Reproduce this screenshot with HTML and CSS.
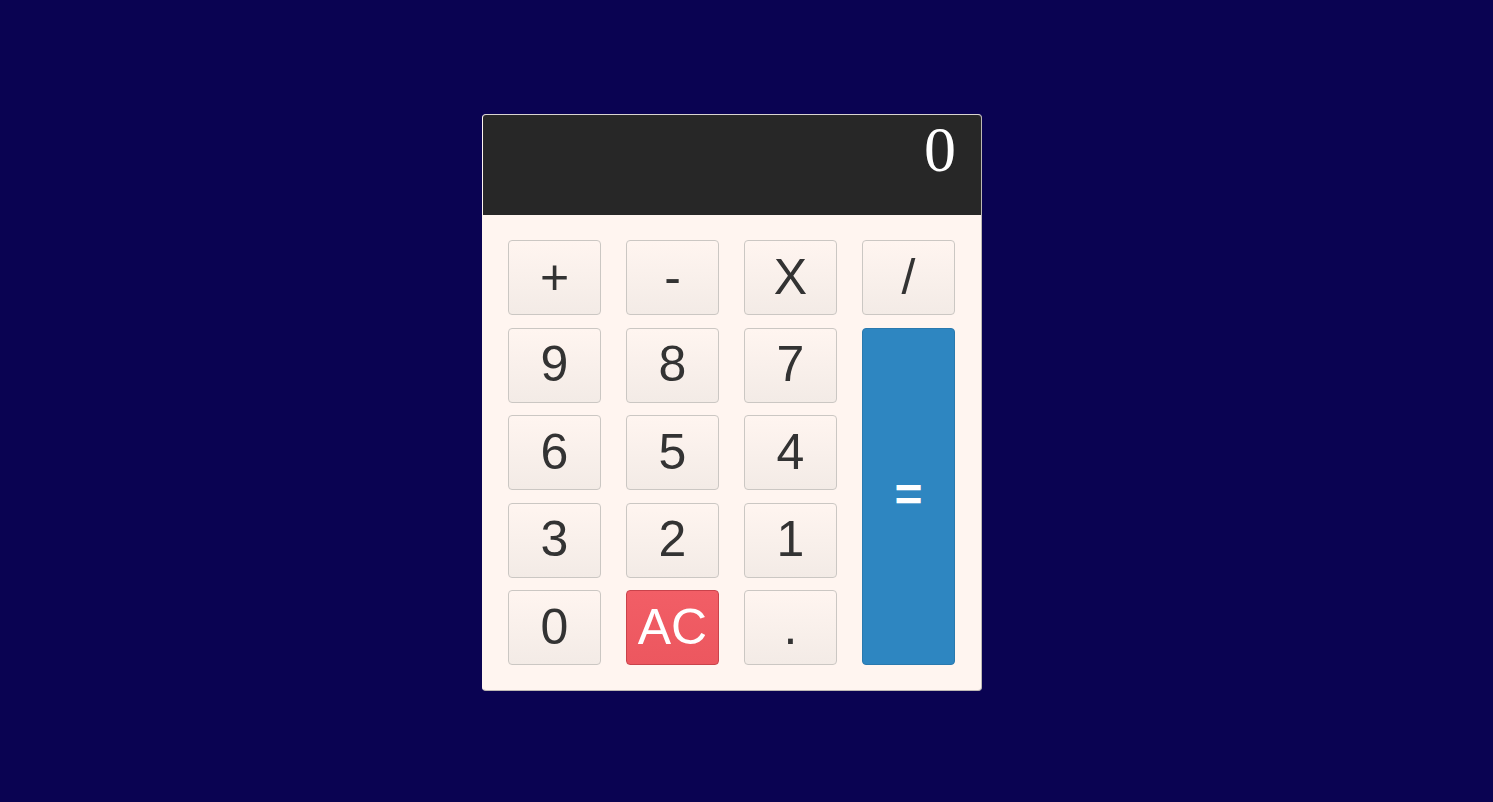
FILE: index.html
```html
<!DOCTYPE html>
<html>
<head>
<meta charset="utf-8">
<link rel="stylesheet" href="styles.css">
</head>
<body>
<div class="calc">
  <div class="display">0</div>
  <div class="keys">
    <button class="key">+</button>
    <button class="key">-</button>
    <button class="key">X</button>
    <button class="key">/</button>
    <button class="key">9</button>
    <button class="key">8</button>
    <button class="key">7</button>
    <button class="key equals">=</button>
    <button class="key">6</button>
    <button class="key">5</button>
    <button class="key">4</button>
    <button class="key">3</button>
    <button class="key">2</button>
    <button class="key">1</button>
    <button class="key">0</button>
    <button class="key clear">AC</button>
    <button class="key">.</button>
  </div>
</div>
</body>
</html>
```
FILE: styles.css
```css
html, body {
  margin: 0;
  padding: 0;
  background: #0a0352;
  height: 100%;
}
body {
  font-family: "Liberation Sans", Arial, sans-serif;
}
.calc {
  margin: 114px 0 0 482px;
  width: 498px;
  background: #fff5f0;
  border: 1px solid #bdb8b4;
  border-top-color: #d9d4d0;
  border-left-color: #fff5f0;
  border-radius: 4px;
  overflow: hidden;
}
.display {
  height: 100px;
  box-sizing: border-box;
  background: #272727;
  color: #fff;
  font-family: "Liberation Serif", "Times New Roman", serif;
  font-size: 64px;
  line-height: 64px;
  text-align: right;
  padding: 3px 25px 0 25px;
}
.keys {
  display: grid;
  grid-template-columns: repeat(4, 93px);
  grid-template-rows: repeat(5, 75px);
  column-gap: 25px;
  row-gap: 12.5px;
  padding: 25px 26px 25px 25px;
}
.key {
  font-family: "Liberation Sans", Arial, sans-serif;
  font-size: 50px;
  color: #333;
  background: linear-gradient(#fff5f0, #f3ebe6);
  border: 1px solid #cbc7c3;
  border-radius: 4px;
  padding: 0 0 2px 0;
  line-height: 1;
}
.key.equals {
  grid-column: 4;
  grid-row: 2 / span 4;
  background: #2e86c1;
  border-color: #2a79ae;
  color: #fff;
  font-weight: bold;
  font-size: 48px;
}
.key.clear {
  background: linear-gradient(#f25e66, #ec575f);
  border-color: #c9434b;
  color: #fff;
}
```
